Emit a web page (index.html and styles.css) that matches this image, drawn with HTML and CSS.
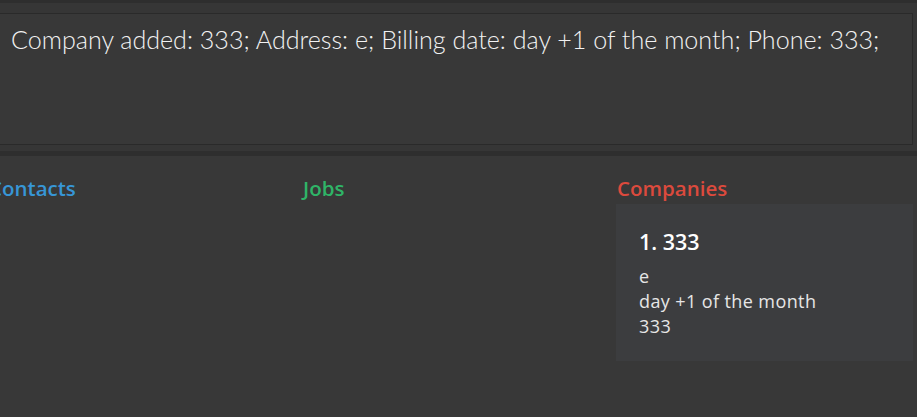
FILE: index.html
```html
<!DOCTYPE html>
<html lang="en">
<head>
<meta charset="utf-8">
<title>Companies</title>
<link rel="stylesheet" href="styles.css">
</head>
<body>
<div class="topbar"></div>
<section class="result-wrap">
  <div class="result">Company added: 333; Address: e; Billing date: day +1 of the month; Phone: 333;</div>
</section>
<div class="divider"></div>
<main class="lists">
  <section class="column">
    <h2 class="col-title contacts">Contacts</h2>
  </section>
  <section class="column">
    <h2 class="col-title jobs">Jobs</h2>
  </section>
  <section class="column">
    <h2 class="col-title companies">Companies</h2>
    <div class="card">
      <div class="card-name">1. 333</div>
      <div class="card-line">e</div>
      <div class="card-line">day +1 of the month</div>
      <div class="card-line">333</div>
    </div>
  </section>
</main>
</body>
</html>
```
FILE: styles.css
```css
html, body {
  margin: 0;
  padding: 0;
}
body {
  width: 917px;
  height: 417px;
  overflow: hidden;
  background: #383838;
  font-family: "Open Sans", Lato, sans-serif;
}
.topbar {
  height: 3px;
  background: #2e2e2e;
}
.result-wrap {
  background: #363636;
  padding: 10px 4px 6px 0;
}
.result {
  margin-left: -4px;
  height: 130px;
  border: 1px solid #2a2a2a;
  background: #383838;
  padding: 0 0 0 14px;
  color: #f2f2f2;
  font-family: Lato, "Open Sans", sans-serif;
  font-weight: 300;
  font-size: 25.1px;
  line-height: 30px;
}
.result::before {
  content: "";
  display: block;
  height: 10px;
}
.divider {
  height: 5px;
  background: #2e2e2e;
}
.lists {
  display: grid;
  grid-template-columns: 314px 314px 314px;
  margin-left: -11px;
  padding-top: 18px;
}
.column {
  display: flex;
  flex-direction: column;
  align-items: flex-start;
}
.col-title {
  margin: 0 0 2px 0;
  font-size: 20.5px;
  line-height: 28px;
  font-weight: 600;
}
.contacts { color: #3796d6; }
.jobs { color: #2fb467; }
.companies { color: #dc4a3d; }
.card {
  margin-left: -1px;
  width: 297px;
  box-sizing: border-box;
  background: #3c3d3f;
  padding: 24px 16px 22px 23px;
}
.card-name {
  color: #ffffff;
  font-weight: 600;
  font-size: 21.5px;
  line-height: 28px;
  margin-bottom: 8px;
}
.card-line {
  color: #e6e6e6;
  font-size: 18px;
  letter-spacing: 0.4px;
  line-height: 25px;
}
```
